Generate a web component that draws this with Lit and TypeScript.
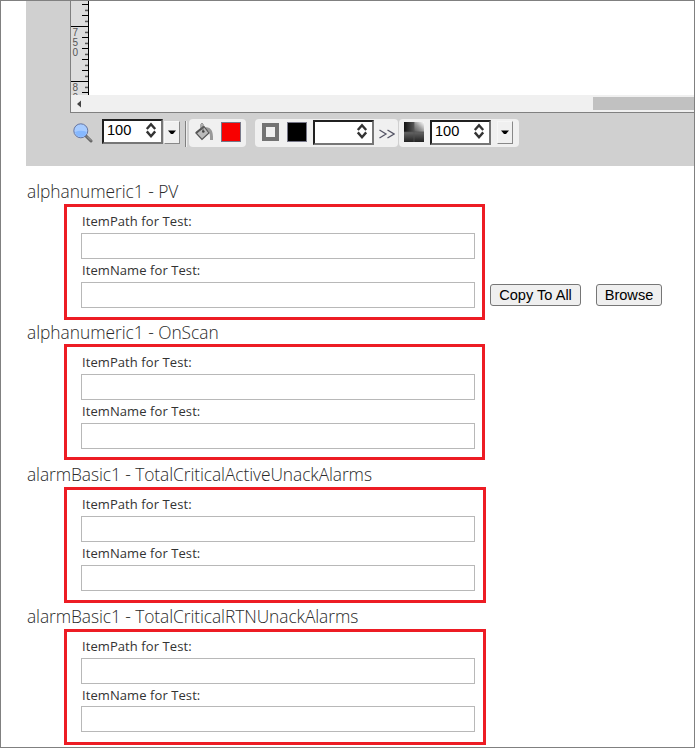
import { LitElement, html, svg, css } from "lit";
import { customElement, property } from "lit/decorators.js";

const LONG = [4, 15, 37, 48, 59, 70, 92];
const SHORT = [9.7, 20.7, 31.7, 42.7, 53.7, 64.7, 75.7, 86.7];
const MAJOR = [26, 81];

@customElement("number-box")
class NumberBox extends LitElement {
  @property() value = "";
  static styles = css`
    :host { display: flex; box-sizing: border-box; width: 61px; height: 25px; background: #fff;
      border: 2px solid; border-color: #202020 #767676 #767676 #202020;
      font: 14.6px/19px "Liberation Sans", Arial, sans-serif; color: #000; }
    .v { flex: 1; padding: 0 0 0 3px; }
    svg { width: 12px; height: 16px; margin: 1px 4px 0 0; }
  `;
  render() {
    return html`<span class="v">${this.value}</span>
      <svg viewBox="0 0 12 16"><path d="M1.8 7 6 2.2 10.2 7M1.8 9.4 6 14.2 10.2 9.4" fill="none" stroke="#333" stroke-width="2.4"/></svg>`;
  }
}

@customElement("drop-button")
class DropButton extends LitElement {
  static styles = css`
    :host { display: flex; box-sizing: border-box; width: 16px; height: 23px; background: #f0f0f0;
      border: 1px solid; border-color: #f6f6f6 #888 #888 #f6f6f6; align-items: center; justify-content: center; }
    svg { width: 8px; height: 5px; }
  `;
  render() {
    return html`<svg viewBox="0 0 8 5"><path d="M0 .5H8L5 4H3Z" fill="#000"/></svg>`;
  }
}

@customElement("test-item")
class TestItem extends LitElement {
  @property() name = "";
  @property({ type: Boolean }) actions = false;
  static styles = css`
    :host { display: block; }
    h2 { margin: 0 0 0 27px; height: var(--title-height, 25px); font: 350 17.4px/25px "Open Sans", "Noto Sans", sans-serif;
      color: #2a2a2a; white-space: nowrap; letter-spacing: var(--title-spacing, -0.05px); }
    .row { display: flex; align-items: flex-end; margin-left: 64px; }
    .box { box-sizing: border-box; width: var(--box-width, 421px); height: 116px;
      border: 3px solid #ed1c24; padding: var(--box-pad, 3px) 0 0 14px; }
    label { display: block; height: 23px; padding-left: 1px; font: 400 13px/23px "Open Sans", "Noto Sans", sans-serif;
      color: #333; white-space: nowrap; letter-spacing: 0.08px; }
    .field { box-sizing: border-box; width: 394px; height: 26px; border: 1px solid #b8b8b8; background: #fff; }
    .field:last-child { margin-top: var(--second-shift, 0px); }
    button { box-sizing: border-box; height: 22px; margin: 0 0 14px; padding: 0; border: 1px solid #767676; border-radius: 3px;
      background: #efefef; color: #000; font: 14.6px/20px "Liberation Sans", Arial, sans-serif; }
    .copy { width: 91px; margin-left: 5px; }
    .browse { width: 66px; margin-left: 15px; }
  `;
  render() {
    return html`<h2>${this.name}</h2>
      <div class="row">
        <div class="box">
          <label>ItemPath for Test:</label><div class="field"></div>
          <label>ItemName for Test:</label><div class="field"></div>
        </div>
        ${this.actions ? html`<button class="copy">Copy To All</button><button class="browse">Browse</button>` : ""}
      </div>`;
  }
}

@customElement("app-root")
class AppRoot extends LitElement {
  static styles = css`
    :host { display: block; box-sizing: border-box; width: 695px; height: 748px; overflow: hidden;
      border: 1px solid #808080; background: #fff; }
    .panel { margin-left: 25px; height: 165px; background: #d0d0d0; padding-left: 44px; }
    .editor { box-sizing: border-box; height: 112px; border: solid #808080; border-width: 0 0 1px 1px; }
    .canvas { display: flex; height: 94px; background: #fff; }
    .ruler { width: 18px; height: 94px; flex: none; }
    .ruler text { font: 10px "Liberation Sans", Arial, sans-serif; fill: #555; }
    .scroll { display: flex; height: 17px; background: #f0f0f0; align-items: center; justify-content: space-between; }
    .scroll svg { width: 5px; height: 8px; margin-left: 6px; }
    .thumb { width: 101px; height: 13px; background: #c1c1c1; }
    .tools { display: flex; align-items: flex-start; padding-top: 6px; }
    .tools svg { flex: none; display: block; }
    .zoom { margin: 4px 9px 0 3px; }
    .drop1 { margin: 2px 0 0 1px; }
    .sep { width: 1px; height: 26px; margin: 2px 0 0 5px; background: #808080; border-right: 1px solid #eee; }
    .group { box-sizing: border-box; display: flex; height: 28px; background: #f0f0f0; border-radius: 4px; }
    .fill { width: 57px; margin-left: 2px; padding: 3px 0 0 6px; }
    .line { width: 143px; margin-left: 9px; padding: 1px 0 0 7px; }
    .alpha { width: 120px; margin-left: 1px; padding: 1px 0 0 5px; }
    .swatch { box-sizing: border-box; width: 20px; height: 20px; border: 1px solid #778; }
    .red { background: #f80000; margin-left: 7px; }
    .black { background: #000; margin: 2px 0 0 8px; }
    .frame { margin-top: 3px; }
    .line number-box { margin-left: 6px; }
    .more { margin: 9px 0 0 5px; }
    .checker { margin-top: 2px; }
    .alpha number-box { margin-left: 6px; }
    .alpha drop-button { margin: 1px 0 0 6px; }
    .items { display: flex; flex-direction: column; padding-top: 13px; }
    test-item { margin-left: -1px; height: 141px; }
    .b { --title-height: 24px; --box-pad: 4px; height: 142px; }
    .c { --box-width: 422px; --title-spacing: -0.09px; height: 142px; }
    .d { --second-shift: -1px; }
  `;
  render() {
    return html`
      <div class="panel">
        <div class="editor">
          <div class="canvas">
            <svg class="ruler" viewBox="0 1 18 94">
              <rect y="0" width="18" height="95" fill="#ddd"/>
              ${MAJOR.map((y) => svg`<rect x="0" y=${y} width="17" height="1" fill="#000"/>`)}
              ${LONG.map((y) => svg`<rect x="11" y=${y} width="6" height="1" fill="#000"/>`)}
              ${SHORT.map((y) => svg`<rect x="14" y=${y} width="3" height="1.5" fill="#555"/>`)}
              <rect x="17" y="0" width="1" height="95" fill="#000"/>
              <text x="1.4" y="36">7</text><text x="1.4" y="46">5</text><text x="1.4" y="56">0</text>
              <text x="1.4" y="91">8</text><text x="1.4" y="101">0</text>
            </svg>
          </div>
          <div class="scroll"><svg viewBox="0 0 5 8"><path d="M4 .5V7.5L0 4Z" fill="#444"/></svg><div class="thumb"></div></div>
        </div>
        <div class="tools">
          <svg class="zoom" width="20" height="20" viewBox="0 0 20 20">
            <path d="M13 13 18 18" stroke="#666" stroke-width="3" stroke-linecap="round"/><path d="M14 13.5 18 17.5" stroke="#aaa"/>
            <circle cx="7.8" cy="7.8" r="7" fill="#a8ccff" stroke="#6675a0"/><path d="M2 9Q8 6.5 13.8 9A6 6 0 0 1 2 9Z" fill="#86b8ff"/>
          </svg>
          <number-box value="100"></number-box>
          <drop-button class="drop1"></drop-button>
          <div class="sep"></div>
          <div class="group fill">
            <svg width="19" height="20" viewBox="0 0 19 20">
              <path d="M10 7Q17 5 16.5 18" fill="none" stroke="#999" stroke-width="3"/>
              <path d="M1 11 9 4.5 14 11 7 17.5Z" fill="#bbb" stroke="#555" stroke-width="1.2"/>
              <path d="M1 11 4 8.5 9 4.5" stroke="#555" stroke-width="2" fill="none"/>
              <path d="M6 7V2.5Q7 0 8 2.5V9" fill="none" stroke="#666"/><circle cx="8.3" cy="9.5" r="1.3" fill="#444"/>
            </svg>
            <div class="swatch red"></div>
          </div>
          <div class="group line">
            <svg class="frame" width="17" height="18" viewBox="0 0 17 18"><rect x="2" y="2" width="13" height="14" fill="#f0f0f0" stroke="#737373" stroke-width="4"/></svg>
            <div class="swatch black"></div>
            <number-box></number-box>
            <svg class="more" width="16" height="10" viewBox="0 0 16 10"><path d="M.5 1 7 5 .5 9M8.5 1 15 5 8.5 9" fill="none" stroke="#556" stroke-width="1.3"/></svg>
          </div>
          <div class="group alpha">
            <svg class="checker" width="20" height="20" viewBox="0 0 20 20">
              <defs>
                <linearGradient id="a" x1="0" y1="1" x2="1" y2="0"><stop offset="0" stop-color="#555"/><stop offset=".5" stop-color="#999"/><stop offset="1" stop-color="#fff"/></linearGradient>
                <linearGradient id="b" x1="0" y1="0" x2="1" y2="0"><stop offset="0" stop-color="#111"/><stop offset="1" stop-color="#555"/></linearGradient>
                <linearGradient id="c" x1="0" y1="0" x2="0" y2="1"><stop offset="0" stop-color="#666"/><stop offset="1" stop-color="#222"/></linearGradient>
              </defs>
              <rect width="10" height="10" fill="url(#b)"/><rect x="10" width="10" height="10" fill="url(#a)"/>
              <rect y="10" width="10" height="10" fill="url(#c)"/><rect x="10" y="10" width="10" height="10" fill="url(#c)"/>
              <path d="M0 10H20M10 0V20" stroke="#555" stroke-width=".7"/>
            </svg>
            <number-box value="100"></number-box>
            <drop-button></drop-button>
          </div>
        </div>
      </div>
      <div class="items">
        <test-item name="alphanumeric1 - PV" actions></test-item>
        <test-item class="b" name="alphanumeric1 - OnScan"></test-item>
        <test-item class="c" name="alarmBasic1 - TotalCriticalActiveUnackAlarms"></test-item>
        <test-item class="c d" name="alarmBasic1 - TotalCriticalRTNUnackAlarms"></test-item>
      </div>`;
  }
}
